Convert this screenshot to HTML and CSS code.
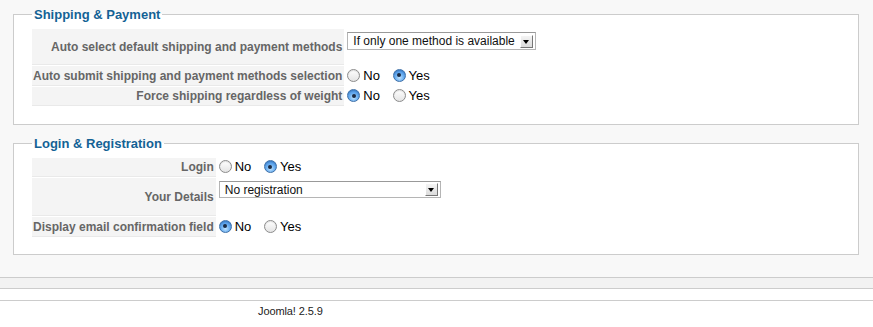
FILE: index.html
```html
<!DOCTYPE html>
<html lang="en">
<head>
    <meta charset="UTF-8">
    <title>Checkout Options</title>
    <link rel="stylesheet" href="styles.css">
</head>
<body>

<div class="content">
    <!-- Shipping & Payment -->
    <fieldset class="adminform">
        <legend>Shipping &amp; Payment</legend>
        <table class="admintable">
            <tr class="tall">
                <td class="key">Auto select default shipping and payment methods</td>
                <td>
                    <div class="select select-wide">
                        <span>If only one method is available</span>
                        <span class="arrow"></span>
                    </div>
                </td>
            </tr>
            <tr class="mid">
                <td class="key">Auto submit shipping and payment methods selection</td>
                <td>
                    <label class="radio"><span class="dot"></span>No</label>
                    <label class="radio"><span class="dot checked"></span>Yes</label>
                </td>
            </tr>
            <tr>
                <td class="key">Force shipping regardless of weight</td>
                <td>
                    <label class="radio"><span class="dot checked"></span>No</label>
                    <label class="radio"><span class="dot"></span>Yes</label>
                </td>
            </tr>
        </table>
    </fieldset>

    <!-- Login & Registration -->
    <fieldset class="adminform second">
        <legend>Login &amp; Registration</legend>
        <table class="admintable">
            <tr>
                <td class="key">Login</td>
                <td>
                    <label class="radio"><span class="dot"></span>No</label>
                    <label class="radio"><span class="dot checked"></span>Yes</label>
                </td>
            </tr>
            <tr class="tall taller">
                <td class="key">Your Details</td>
                <td>
                    <div class="select select-long">
                        <span>No registration</span>
                        <span class="arrow"></span>
                    </div>
                </td>
            </tr>
            <tr class="mid">
                <td class="key">Display email confirmation field</td>
                <td>
                    <label class="radio"><span class="dot checked"></span>No</label>
                    <label class="radio"><span class="dot"></span>Yes</label>
                </td>
            </tr>
        </table>
    </fieldset>
</div>

<div class="band"></div>

<div class="footer">
    <p>Joomla! 2.5.9</p>
</div>

</body>
</html>
```

FILE: styles.css
```css
* {
    margin: 0;
    padding: 0;
    box-sizing: border-box;
}

body {
    background: #fff;
    font-family: 'Liberation Sans', Arial, sans-serif;
    color: #000;
}

.content {
    background-color: #f8f8f8;
    padding: 7px 14px 22px 13px;
}

.adminform {
    background-color: #fff;
    border: 1px solid #ccc;
    padding: 6px 17px 17px 17px;
    margin-bottom: 11px;
}

.adminform.second {
    margin-bottom: 0;
    padding-bottom: 16px;
}

.adminform legend {
    color: #146295;
    font-size: 13px;
    font-weight: bold;
    line-height: 15px;
    padding: 0 2px;
    margin-left: 1px;
}

.admintable {
    border-collapse: separate;
    border-spacing: 1px;
}

.admintable td {
    height: 19px;
    font-size: 13px;
    vertical-align: middle;
    padding: 0 0 0 2px;
}

.admintable tr.mid td {
    height: 20px;
}

.admintable tr.tall td {
    height: 36px;
    vertical-align: top;
    padding-top: 3px;
}

.admintable tr.taller td {
    height: 38px;
    padding-top: 3px;
}

.admintable td.key,
.admintable tr.tall td.key {
    background-color: #f4f4f4;
    border-bottom: 1px solid #e9e9e9;
    color: #666;
    font-size: 12px;
    font-weight: bold;
    text-align: right;
    white-space: nowrap;
    vertical-align: middle;
    padding: 0 2px 0 1px;
}

/* fake select boxes */
.select {
    display: flex;
    align-items: center;
    justify-content: space-between;
    height: 18px;
    background: #fff;
    border: 1px solid #b5b5b5;
    border-top-color: #999;
    font-size: 12px;
    color: #111;
    padding: 0 2px 0 5px;
}

.select-wide {
    width: 189px;
}

.select-long {
    width: 222px;
    height: 17px;
}

.select .arrow {
    position: relative;
    width: 13px;
    height: 13px;
    background: linear-gradient(#f4f4f4, #dcdcdc);
    border: 1px solid #fff;
    border-right-color: #777;
    border-bottom-color: #777;
}

.select .arrow::after {
    content: "";
    position: absolute;
    left: 2px;
    top: 4px;
    border-left: 3.5px solid transparent;
    border-right: 3.5px solid transparent;
    border-top: 4px solid #000;
}

/* radio buttons */
.radio {
    display: inline-flex;
    align-items: center;
    margin-right: 9px;
    font-size: 13px;
    line-height: 15px;
}

.dot {
    position: relative;
    display: inline-block;
    width: 13px;
    height: 13px;
    margin-right: 3px;
    border-radius: 50%;
    border: 1px solid #8c8c8c;
    background: linear-gradient(#ffffff, #e4e4e4);
    box-shadow: inset 0 1px 1px rgba(0, 0, 0, 0.12);
}

.dot.checked {
    border-color: #3c6fa8;
    background: radial-gradient(circle at 50% 70%, #bfe3ff 0%, #6aaef0 45%, #2f7bd6 100%);
}

.dot.checked::after {
    content: "";
    position: absolute;
    left: 3.5px;
    top: 3.5px;
    width: 4px;
    height: 4px;
    border-radius: 50%;
    background: #1b2b44;
}

.band {
    height: 12px;
    background-color: #f2f2f2;
    border-top: 1px solid #ccc;
    border-bottom: 1px solid #ccc;
}

.footer {
    margin-top: 11px;
    border-top: 1px solid #ccc;
    padding: 4px 0 0 258px;
}

.footer p {
    font-size: 11px;
    color: #222;
    letter-spacing: -0.1px;
}
```
